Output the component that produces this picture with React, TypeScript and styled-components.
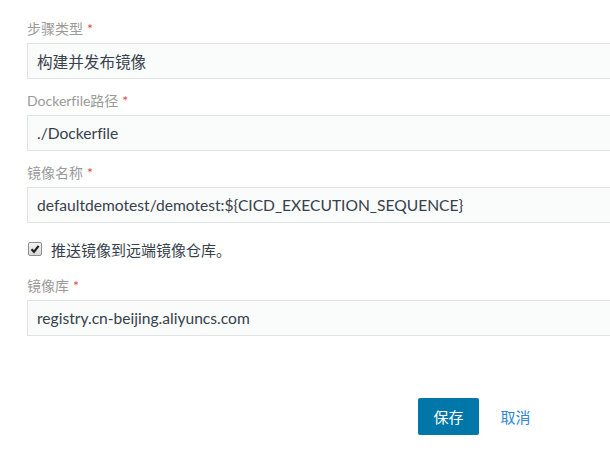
import React from "react";
import styled, { createGlobalStyle } from "styled-components";

const Global = createGlobalStyle`
  html, body { margin: 0; padding: 0; background: #fff; overflow: hidden; }
  body {
    font-family: Lato, "Noto Sans CJK SC", sans-serif;
    font-variant-ligatures: none;
  }
`;

const Form = styled.div`
  width: 583px;
  padding: 20px 0 0 27px;
  display: flex;
  flex-direction: column;
`;

const Field = styled.div`
  display: flex;
  flex-direction: column;
  gap: 5px;
  margin-bottom: 13px;
`;

const Label = styled.label`
  font-size: 14px;
  line-height: 18px;
  color: #9a9a9a;
`;

const Star = styled.span`
  color: #e64444;
  margin-left: 4px;
`;

const Input = styled.div`
  box-sizing: border-box;
  width: calc(100% + 20px);
  height: 36px;
  background: #fafbfb;
  border: 1px solid #dfe3e3;
  border-right: none;
  padding: 0 9px;
  display: flex;
  align-items: center;
  font-size: 15.6px;
  color: #36414b;
`;

const CheckRow = styled.div`
  display: flex;
  align-items: center;
  gap: 9px;
  height: 26px;
  margin: 0 0 15px 1px;
  font-size: 15px;
  color: #36414b;
`;

const Box = styled.span`
  box-sizing: border-box;
  width: 14px;
  height: 14px;
  border: 1px solid #8d8d8d;
  border-radius: 2px;
  background: linear-gradient(#f4f4f4, #d9d9d9);
  display: flex;
  align-items: center;
  justify-content: center;
`;

const Footer = styled.div`
  display: flex;
  justify-content: flex-end;
  align-items: center;
  gap: 6px;
  margin-top: 49px;
  padding-right: 64px;
`;

const Button = styled.button<{ $primary?: boolean }>`
  height: 37px;
  min-width: 61px;
  padding: 0 15px;
  border: none;
  border-radius: 2px;
  font-family: Lato, "Noto Sans CJK SC", sans-serif;
  font-size: 15px;
  background: ${(p) => (p.$primary ? "#0077a8" : "transparent")};
  color: ${(p) => (p.$primary ? "#ffffff" : "#2d88d6")};
  cursor: pointer;
`;

const fields = [
  { label: "步骤类型", value: "构建并发布镜像" },
  { label: "Dockerfile路径", value: "./Dockerfile" },
  { label: "镜像名称", value: "defaultdemotest/demotest:${CICD_EXECUTION_SEQUENCE}" },
];

export default function App() {
  return (
    <>
      <Global />
      <Form>
        {fields.map((f) => (
          <Field key={f.label}>
            <Label>
              {f.label}
              <Star>*</Star>
            </Label>
            <Input>{f.value}</Input>
          </Field>
        ))}
        <CheckRow>
          <Box>
            <svg width="10" height="10" viewBox="0 0 10 10">
              <path d="M1.5 5.2 L4 7.8 L8.6 1.8" stroke="#222" strokeWidth="2.2" fill="none" />
            </svg>
          </Box>
          推送镜像到远端镜像仓库。
        </CheckRow>
        <Field>
          <Label>
            镜像库
            <Star>*</Star>
          </Label>
          <Input>registry.cn-beijing.aliyuncs.com</Input>
        </Field>
        <Footer>
          <Button $primary>保存</Button>
          <Button>取消</Button>
        </Footer>
      </Form>
    </>
  );
}
